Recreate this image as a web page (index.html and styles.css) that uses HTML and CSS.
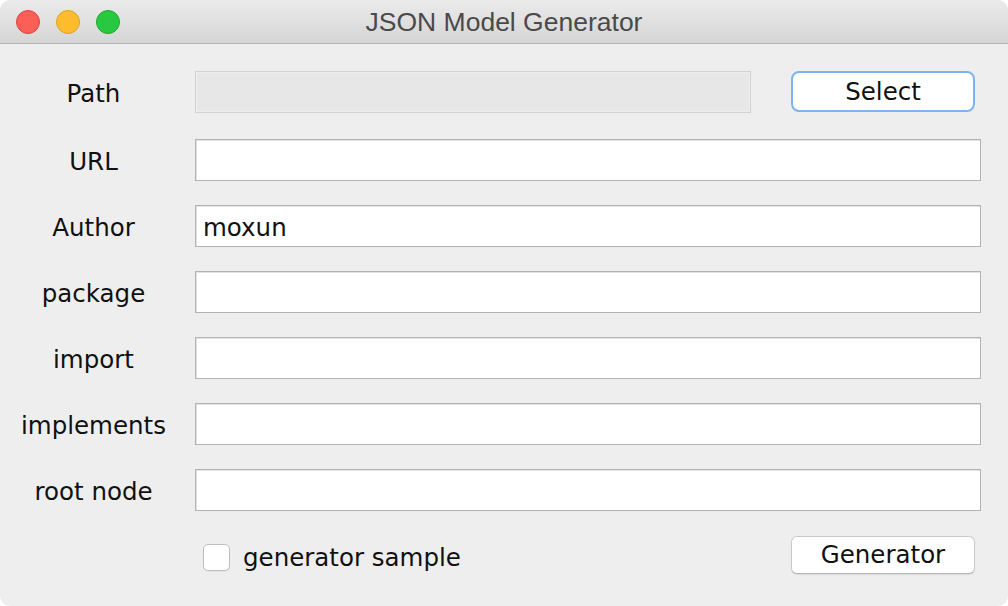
FILE: index.html
```html
<!DOCTYPE html>
<html>
<head>
<meta charset="utf-8">
<title>JSON Model Generator</title>
<link rel="stylesheet" href="styles.css">
</head>
<body>
<div class="window">
  <div class="titlebar">
    <div class="lights">
      <span class="light red"></span>
      <span class="light yellow"></span>
      <span class="light green"></span>
    </div>
    <div class="title">JSON Model Generator</div>
  </div>
  <div class="content">
    <div class="form">
      <div class="label label-top">Path</div>
      <div class="path-row">
        <div class="field disabled"></div>
        <button class="btn btn-focus">Select</button>
      </div>

      <div class="label">URL</div>
      <div class="field"></div>

      <div class="label">Author</div>
      <div class="field">moxun</div>

      <div class="label">package</div>
      <div class="field"></div>

      <div class="label">import</div>
      <div class="field"></div>

      <div class="label">implements</div>
      <div class="field"></div>

      <div class="label">root node</div>
      <div class="field"></div>

      <div></div>
      <div class="bottom-row">
        <label class="check">
          <span class="box"></span>
          <span class="check-text">generator sample</span>
        </label>
        <button class="btn btn-plain">Generator</button>
      </div>
    </div>
  </div>
</div>
</body>
</html>
```
FILE: styles.css
```css
html, body {
  margin: 0;
  padding: 0;
  background: #ffffff;
}
body {
  font-family: "DejaVu Sans", "Liberation Sans", sans-serif;
  color: #111;
}
.window {
  width: 1008px;
  height: 606px;
  background: #eeeeee;
  border-radius: 10px;
  overflow: hidden;
  display: flex;
  flex-direction: column;
}
.titlebar {
  height: 43px;
  flex: none;
  position: relative;
  background: linear-gradient(#ebebeb, #d5d5d5);
  border-bottom: 1px solid #b2b2b2;
  display: flex;
  align-items: center;
  justify-content: center;
}
.lights {
  position: absolute;
  left: 16px;
  top: 10px;
  display: flex;
  gap: 16px;
}
.light {
  width: 24px;
  height: 24px;
  border-radius: 50%;
  box-sizing: border-box;
}
.red { background: #fc5f57; border: 1px solid #e0443e; }
.yellow { background: #fdbc2e; border: 1px solid #dea123; }
.green { background: #28c840; border: 1px solid #1aab29; }
.title {
  font-family: "Liberation Sans", Arial, sans-serif;
  font-size: 26.5px;
  color: #4a4a4a;
  margin-top: 1px;
}
.content {
  flex: 1;
  padding: 27px 27px 0 0;
}
.form {
  display: grid;
  grid-template-columns: 187px 1fr;
  column-gap: 8px;
  grid-template-rows: 44px;
  grid-auto-rows: 42px;
  row-gap: 24px;
  align-items: start;
}
.label {
  text-align: center;
  font-size: 24.5px;
  line-height: 42px;
  height: 42px;
  padding-top: 2px;
  box-sizing: border-box;
}
.path-row {
  display: flex;
  align-items: flex-start;
  gap: 40px;
  height: 42px;
  padding-right: 6px;
}
.field {
  height: 42px;
  box-sizing: border-box;
  background: #ffffff;
  border: 1px solid #b3b3b3;
  box-shadow: inset 1px 1px 0 #e2e2e2;
  font-size: 24.5px;
  line-height: 40px;
  padding-left: 7px;
  padding-top: 2px;
}
.path-row .field {
  flex: 1;
}
.field.disabled {
  background: #e7e7e7;
  border-color: #d2d2d2;
  box-shadow: inset 0 0 0 1px #ededed;
}
.btn {
  font-family: "DejaVu Sans", "Liberation Sans", sans-serif;
  font-size: 24.5px;
  color: #111;
  background: #ffffff;
  box-sizing: border-box;
  width: 184px;
  padding: 0;
  cursor: default;
}
.btn-focus {
  height: 41px;
  border: 2px solid #7eb3ef;
  border-radius: 8px;
}
.bottom-row {
  display: flex;
  align-items: center;
  justify-content: space-between;
  padding-right: 6px;
  height: 42px;
}
.btn-plain {
  height: 38px;
  border: 1px solid #c9c9c9;
  border-bottom-color: #b5b5b5;
  border-radius: 6px;
  box-shadow: 0 1px 1px rgba(0,0,0,0.08);
  margin-top: -3px;
}
.check {
  display: flex;
  align-items: center;
  gap: 13px;
  padding-left: 8px;
  margin-top: 3px;
}
.box {
  width: 27px;
  height: 27px;
  box-sizing: border-box;
  background: #ffffff;
  border: 1px solid #bdbdbd;
  border-radius: 5px;
  box-shadow: 0 1px 0 rgba(0,0,0,0.04);
}
.check-text {
  font-size: 24.5px;
}
```
